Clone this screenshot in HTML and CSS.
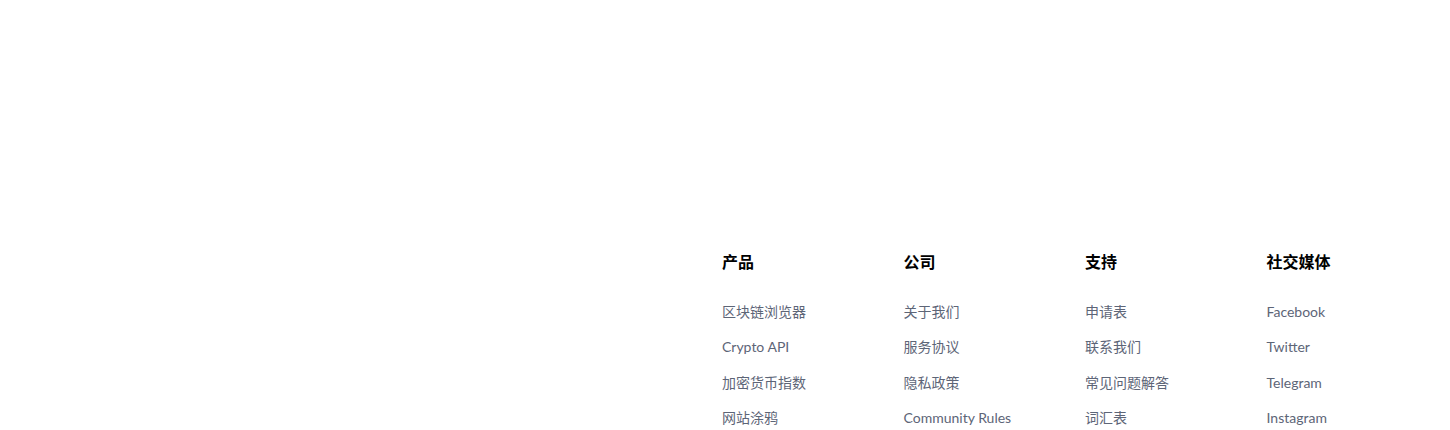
FILE: index.html
```html
<!DOCTYPE html>
<html lang="zh-CN">
<head>
  <meta charset="UTF-8">
  <meta name="viewport" content="width=device-width, initial-scale=1.0">
  <title>Footer</title>
  <link rel="stylesheet" href="styles.css">
</head>
<body>
  <!-- Footer -->
  <footer class="footer">
    <div class="footer-inner">
      <div class="footer-brand"></div>

      <div class="footer-col">
        <h4>产品</h4>
        <ul>
          <li><a href="#">区块链浏览器</a></li>
          <li><a href="#">Crypto API</a></li>
          <li><a href="#">加密货币指数</a></li>
          <li><a href="#">网站涂鸦</a></li>
        </ul>
      </div>

      <div class="footer-col">
        <h4>公司</h4>
        <ul>
          <li><a href="#">关于我们</a></li>
          <li><a href="#">服务协议</a></li>
          <li><a href="#">隐私政策</a></li>
          <li><a href="#">Community Rules</a></li>
        </ul>
      </div>

      <div class="footer-col">
        <h4>支持</h4>
        <ul>
          <li><a href="#">申请表</a></li>
          <li><a href="#">联系我们</a></li>
          <li><a href="#">常见问题解答</a></li>
          <li><a href="#">词汇表</a></li>
        </ul>
      </div>

      <div class="footer-col">
        <h4>社交媒体</h4>
        <ul>
          <li><a href="#">Facebook</a></li>
          <li><a href="#">Twitter</a></li>
          <li><a href="#">Telegram</a></li>
          <li><a href="#">Instagram</a></li>
        </ul>
      </div>
    </div>
  </footer>
</body>
</html>
```

FILE: styles.css
```css
body {
  font-family: Lato, "Noto Sans CJK SC", sans-serif;
  margin: 0;
  padding: 0;
  background-color: #fff;
  color: #5d6577;
  overflow: hidden;
}

.footer {
  padding-top: 250px;
}

.footer-inner {
  display: grid;
  grid-template-columns: 722px repeat(4, 181.5px);
}

.footer-col h4 {
  margin: 0 0 28px;
  font-size: 16px;
  line-height: 24px;
  font-weight: bold;
  color: #000;
}

.footer-col ul {
  list-style: none;
  margin: 0;
  padding: 0;
  display: flex;
  flex-direction: column;
  gap: 15.3px;
}

.footer-col li {
  font-size: 14px;
  line-height: 20px;
}

.footer-col a {
  color: #5d6577;
  text-decoration: none;
}

.footer-col a:hover {
  color: #2c3e50;
}
```
